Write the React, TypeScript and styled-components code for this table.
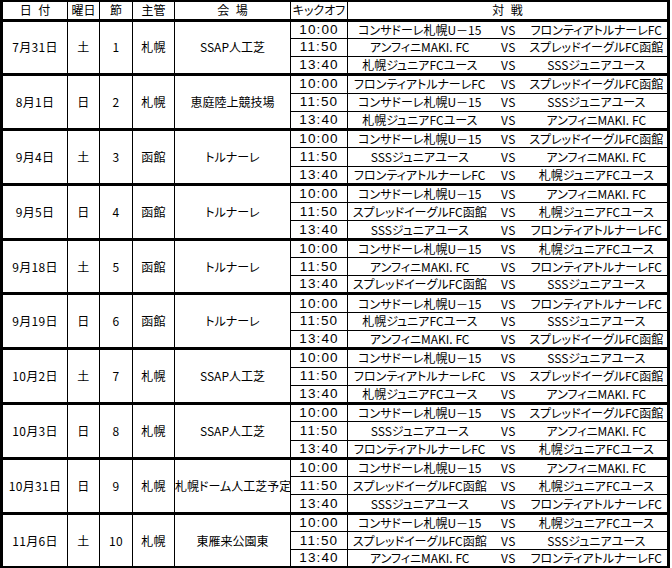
import React from "react";
import styled, { createGlobalStyle } from "styled-components";

const GlobalStyle = createGlobalStyle`
  html, body { margin: 0; padding: 0; background: #ffffff; }
  #root { width: 672px; height: 568px; overflow: hidden; }
`;

type Match = { time: string; home: string; away: string };
type Day = {
  date: string;
  wd: string;
  round: string;
  host: string;
  venue: string;
  matches: Match[];
};

const C = "コンサドーレ札幌U－15";
const F = "フロンティアトルナーレFC";
const A = "アンフィニMAKI. FC";
const S = "スプレッドイーグルFC函館";
const J = "札幌ジュニアFCユース";
const Y = "SSSジュニアユース";

const T = ["10:00", "11:50", "13:40"];
const m = (pairs: [string, string][]): Match[] =>
  pairs.map(([home, away], i) => ({ time: T[i], home, away }));

const days: Day[] = [
  { date: "7月31日", wd: "土", round: "1", host: "札幌", venue: "SSAP人工芝", matches: m([[C, F], [A, S], [J, Y]]) },
  { date: "8月1日", wd: "日", round: "2", host: "札幌", venue: "恵庭陸上競技場", matches: m([[F, S], [C, Y], [J, A]]) },
  { date: "9月4日", wd: "土", round: "3", host: "函館", venue: "トルナーレ", matches: m([[C, S], [Y, A], [F, J]]) },
  { date: "9月5日", wd: "日", round: "4", host: "函館", venue: "トルナーレ", matches: m([[C, A], [S, J], [Y, F]]) },
  { date: "9月18日", wd: "土", round: "5", host: "函館", venue: "トルナーレ", matches: m([[C, J], [A, F], [S, Y]]) },
  { date: "9月19日", wd: "日", round: "6", host: "函館", venue: "トルナーレ", matches: m([[C, F], [J, Y], [A, S]]) },
  { date: "10月2日", wd: "土", round: "7", host: "札幌", venue: "SSAP人工芝", matches: m([[C, Y], [F, S], [J, A]]) },
  { date: "10月3日", wd: "日", round: "8", host: "札幌", venue: "SSAP人工芝", matches: m([[C, S], [Y, A], [F, J]]) },
  { date: "10月31日", wd: "日", round: "9", host: "札幌", venue: "札幌ドーム人工芝予定", matches: m([[C, A], [S, J], [Y, F]]) },
  { date: "11月6日", wd: "土", round: "10", host: "札幌", venue: "東雁来公園東", matches: m([[C, J], [S, Y], [A, F]]) },
];

const Sheet = styled.table`
  border-collapse: collapse;
  table-layout: fixed;
  width: 670px;
  border-top: 2px solid #000;
  border-left: 3px solid #000;
  border-right: 3px solid #000;
  border-bottom: 3px solid #000;
  font-family: "Noto Sans CJK JP", "Liberation Sans", sans-serif;
  font-feature-settings: "palt";
  font-size: 12px;
  color: #000;
`;

const HeadRow = styled.tr`
  height: 19px;
`;

const BodyRow = styled.tr`
  height: 18.27px;
`;

const HeadCell = styled.th`
  border: 1px solid #000;
  border-bottom: 3px solid #000;
  padding: 0;
  font-weight: normal;
  text-align: center;
  vertical-align: middle;
  line-height: 14px;
  white-space: nowrap;
  word-spacing: 4px;
`;

const InfoCell = styled.td<{ $tight?: boolean }>`
  border: 1px solid #000;
  border-bottom: 3px solid #000;
  padding: 0;
  text-align: center;
  vertical-align: middle;
  line-height: 14px;
  white-space: nowrap;
  letter-spacing: ${(p) => (p.$tight ? "0" : "0.3px")};
`;

const TimeCell = styled.td<{ $last: boolean }>`
  border: 1px solid #000;
  border-bottom: ${(p) => (p.$last ? "3px" : "1px")} solid #000;
  padding: 0;
  text-align: center;
  vertical-align: middle;
  line-height: 14px;
  font-family: "Liberation Sans", Arial, sans-serif;
  font-size: 13.5px;
  letter-spacing: 1.1px;
`;

const TeamCell = styled.td<{ $last: boolean; $side: "home" | "away" }>`
  border-top: 1px solid #000;
  border-bottom: ${(p) => (p.$last ? "3px" : "1px")} solid #000;
  border-left: ${(p) => (p.$side === "home" ? "1px solid #000" : "none")};
  padding: 0;
  text-align: center;
  vertical-align: middle;
  line-height: 14px;
  white-space: nowrap;
  overflow: hidden;
`;

const VsCell = styled.td<{ $last: boolean }>`
  border-top: 1px solid #000;
  border-bottom: ${(p) => (p.$last ? "3px" : "1px")} solid #000;
  padding: 0;
  text-align: center;
  vertical-align: middle;
  line-height: 14px;
  letter-spacing: 0.5px;
`;

const widths = [66, 32, 33, 42, 116, 57, 144, 34, 143];

export default function App() {
  return (
    <>
      <GlobalStyle />
      <Sheet>
        <colgroup>
          {widths.map((w, i) => (
            <col key={i} style={{ width: w }} />
          ))}
        </colgroup>
        <thead>
          <HeadRow>
            <HeadCell>日 付</HeadCell>
            <HeadCell>曜日</HeadCell>
            <HeadCell>節</HeadCell>
            <HeadCell>主管</HeadCell>
            <HeadCell>会 場</HeadCell>
            <HeadCell>キックオフ</HeadCell>
            <HeadCell colSpan={3}>対 戦</HeadCell>
          </HeadRow>
        </thead>
        <tbody>
          {days.map((d) =>
            d.matches.map((mt, i) => {
              const last = i === d.matches.length - 1;
              return (
                <BodyRow key={d.date + mt.time}>
                  {i === 0 && (
                    <>
                      <InfoCell rowSpan={3}>{d.date}</InfoCell>
                      <InfoCell rowSpan={3}>{d.wd}</InfoCell>
                      <InfoCell rowSpan={3}>{d.round}</InfoCell>
                      <InfoCell rowSpan={3}>{d.host}</InfoCell>
                      <InfoCell rowSpan={3} $tight>
                        {d.venue}
                      </InfoCell>
                    </>
                  )}
                  <TimeCell $last={last}>{mt.time}</TimeCell>
                  <TeamCell $last={last} $side="home">
                    {mt.home}
                  </TeamCell>
                  <VsCell $last={last}>VS</VsCell>
                  <TeamCell $last={last} $side="away">
                    {mt.away}
                  </TeamCell>
                </BodyRow>
              );
            })
          )}
        </tbody>
      </Sheet>
    </>
  );
}
